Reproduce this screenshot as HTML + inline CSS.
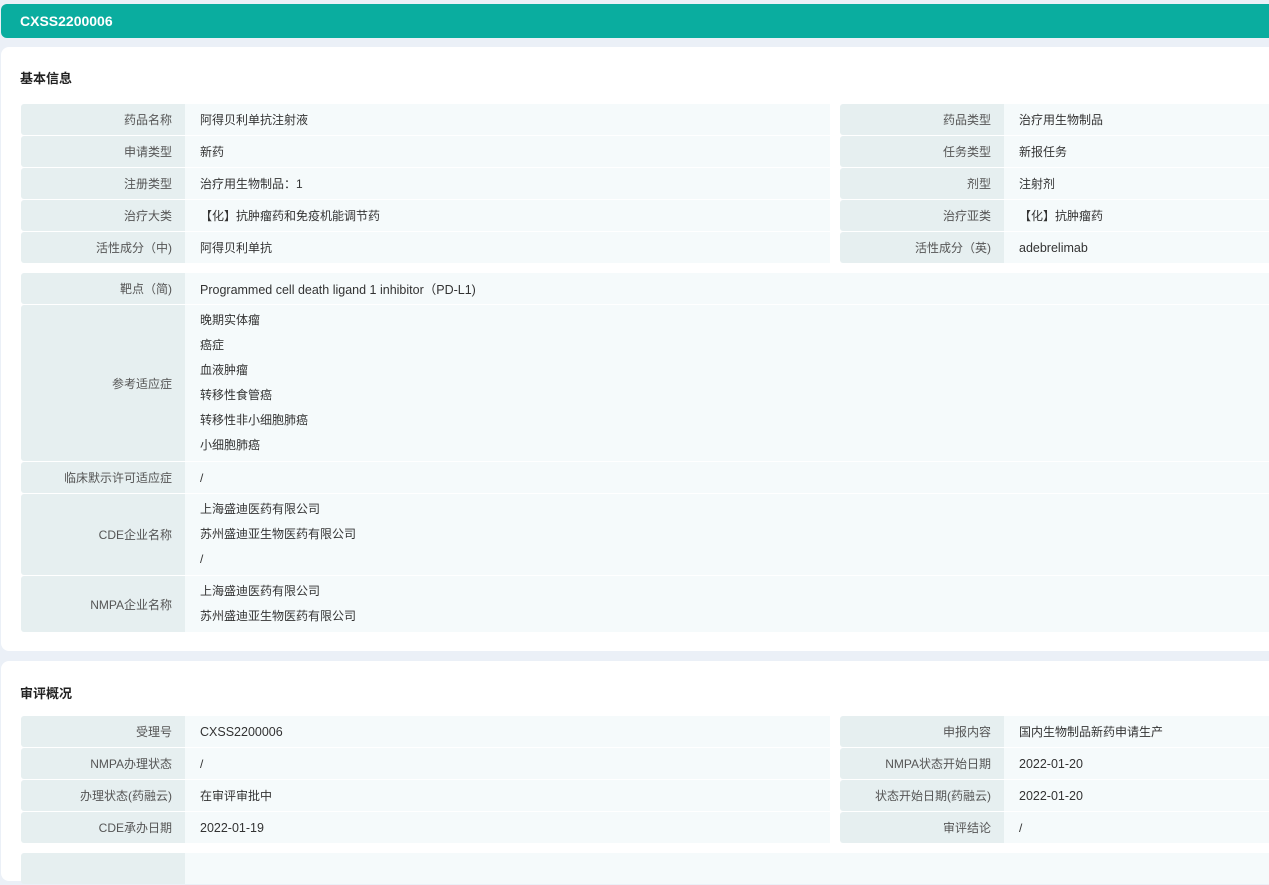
<!DOCTYPE html>
<html><head><meta charset="utf-8"><style>
*{margin:0;padding:0;box-sizing:border-box}
body{width:1269px;height:855px;overflow:hidden;background:#ebf0f7;font-family:"Liberation Sans","Noto Sans CJK SC",sans-serif;font-size:12px;color:#333;position:relative}
.hdr{position:absolute;left:1px;top:4px;width:1280px;height:34px;background:#0aad9f;border-radius:6px;color:#fff;font-weight:bold;font-size:14px;line-height:34px;padding-left:19px}
.card{position:absolute;left:1px;width:1290px;background:#fff;border-radius:8px}
.ttl{position:absolute;left:20px;font-weight:bold;font-size:13px;color:#222}
.t{position:absolute}
.r{display:flex;margin-bottom:1px}
.l{width:164px;background:#e6eff0;color:#555;text-align:right;padding-right:13px;display:flex;align-items:center;justify-content:flex-end;border-radius:3px 0 0 3px}
.v{flex:1;background:#f5fafb;padding-left:15px;display:flex;align-items:center}
.v.m{flex-direction:column;align-items:flex-start;justify-content:center}
.v.m div{line-height:25px}
.h32{height:31px}
.lat{font-size:12.5px}
</style></head><body>
<div class="hdr">CXSS2200006</div>
<div class="card" style="top:47px;height:604px"></div>
<div class="ttl" style="top:68px">基本信息</div>
<div class="t" style="left:21px;top:104px;width:809px">
<div class="r h32"><div class="l">药品名称</div><div class="v">阿得贝利单抗注射液</div></div>
<div class="r h32"><div class="l">申请类型</div><div class="v">新药</div></div>
<div class="r h32"><div class="l">注册类型</div><div class="v">治疗用生物制品：1</div></div>
<div class="r h32"><div class="l">治疗大类</div><div class="v">【化】抗肿瘤药和免疫机能调节药</div></div>
<div class="r h32"><div class="l">活性成分（中)</div><div class="v">阿得贝利单抗</div></div>
</div>
<div class="t" style="left:840px;top:104px;width:440px">
<div class="r h32"><div class="l">药品类型</div><div class="v">治疗用生物制品</div></div>
<div class="r h32"><div class="l">任务类型</div><div class="v">新报任务</div></div>
<div class="r h32"><div class="l">剂型</div><div class="v">注射剂</div></div>
<div class="r h32"><div class="l">治疗亚类</div><div class="v">【化】抗肿瘤药</div></div>
<div class="r h32"><div class="l">活性成分（英)</div><div class="v lat">adebrelimab</div></div>
</div>
<div class="t" style="left:21px;top:273px;width:1260px">
<div class="r h32"><div class="l">靶点（简)</div><div class="v lat">Programmed cell death ligand 1 inhibitor（PD-L1)</div></div>
<div class="r" style="height:156px"><div class="l">参考适应症</div><div class="v m"><div>晚期实体瘤</div><div>癌症</div><div>血液肿瘤</div><div>转移性食管癌</div><div>转移性非小细胞肺癌</div><div>小细胞肺癌</div></div></div>
<div class="r h32"><div class="l">临床默示许可适应症</div><div class="v">/</div></div>
<div class="r" style="height:81px"><div class="l">CDE企业名称</div><div class="v m"><div>上海盛迪医药有限公司</div><div>苏州盛迪亚生物医药有限公司</div><div>/</div></div></div>
<div class="r" style="height:56px"><div class="l">NMPA企业名称</div><div class="v m"><div>上海盛迪医药有限公司</div><div>苏州盛迪亚生物医药有限公司</div></div></div>
</div>
<div class="card" style="top:661px;height:220px"></div>
<div class="ttl" style="top:683px">审评概况</div>
<div class="t" style="left:21px;top:716px;width:809px">
<div class="r h32"><div class="l">受理号</div><div class="v lat">CXSS2200006</div></div>
<div class="r h32"><div class="l">NMPA办理状态</div><div class="v">/</div></div>
<div class="r h32"><div class="l">办理状态(药融云)</div><div class="v">在审评审批中</div></div>
<div class="r h32"><div class="l">CDE承办日期</div><div class="v lat">2022-01-19</div></div>
</div>
<div class="t" style="left:21px;top:853px;width:1260px">
<div class="r h32"><div class="l"></div><div class="v"></div></div>
</div>
<div class="t" style="left:840px;top:716px;width:440px">
<div class="r h32"><div class="l">申报内容</div><div class="v">国内生物制品新药申请生产</div></div>
<div class="r h32"><div class="l">NMPA状态开始日期</div><div class="v lat">2022-01-20</div></div>
<div class="r h32"><div class="l">状态开始日期(药融云)</div><div class="v lat">2022-01-20</div></div>
<div class="r h32"><div class="l">审评结论</div><div class="v">/</div></div>
</div>
</body></html>
